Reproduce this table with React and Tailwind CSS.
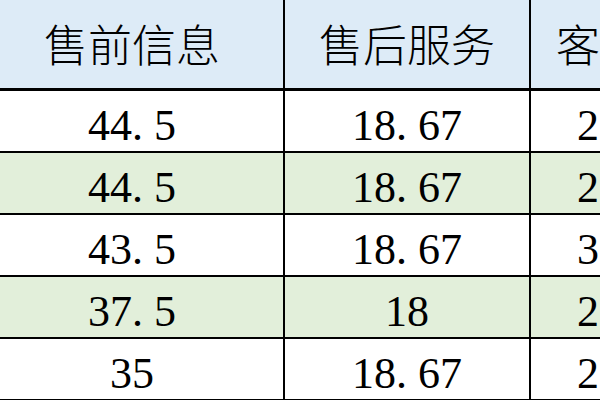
import React from "react";

const rows = [
  ["44.5", "18.67", "23.33"],
  ["44.5", "18.67", "23.33"],
  ["43.5", "18.67", "31.67"],
  ["37.5", "18", "25.33"],
  ["35", "18.67", "23.33"],
];

// SimSun style: the period takes a full half-width cell
const Num = ({ value }) => {
  const parts = value.split(".");
  if (parts.length === 1) return <span>{value}</span>;
  return (
    <span className="whitespace-nowrap">
      {parts[0]}
      <span className="inline-block w-[0.5em] text-left">.</span>
      {parts[1]}
    </span>
  );
};

const App = () => {
  return (
    <div className="w-[600px] h-[400px] overflow-hidden bg-white text-black">
      <div className="w-[760px]">
        <div className="flex h-[91px] bg-[#ddebf7] border-b-[3px] border-black font-['Noto_Sans_CJK_SC',sans-serif] font-light text-[44px] leading-none">
          <div className="w-[285px] shrink-0 border-r-2 border-black flex items-center justify-center pr-[19px] pb-[2px]">
            售前信息
          </div>
          <div className="w-[246px] shrink-0 border-r-2 border-black flex items-center justify-center pb-[2px]">
            售后服务
          </div>
          <div className="w-[229px] shrink-0 flex items-center pl-[25px] pb-[2px] whitespace-nowrap">
            客服评价
          </div>
        </div>
        {rows.map((r, i) => (
          <div
            key={i}
            className={`flex h-[62px] border-b-2 border-black font-['Liberation_Serif',serif] text-[44px] leading-none ${
              i % 2 === 1 ? "bg-[#e2efda]" : "bg-white"
            }`}
          >
            <div className="w-[285px] shrink-0 border-r-2 border-black flex items-center justify-center pr-[19px] pt-[10px]">
              <Num value={r[0]} />
            </div>
            <div className="w-[246px] shrink-0 border-r-2 border-black flex items-center justify-center pt-[10px]">
              <Num value={r[1]} />
            </div>
            <div className="w-[229px] shrink-0 flex items-center pl-[46px] pt-[10px]">
              <Num value={r[2]} />
            </div>
          </div>
        ))}
      </div>
    </div>
  );
};

export default App;
